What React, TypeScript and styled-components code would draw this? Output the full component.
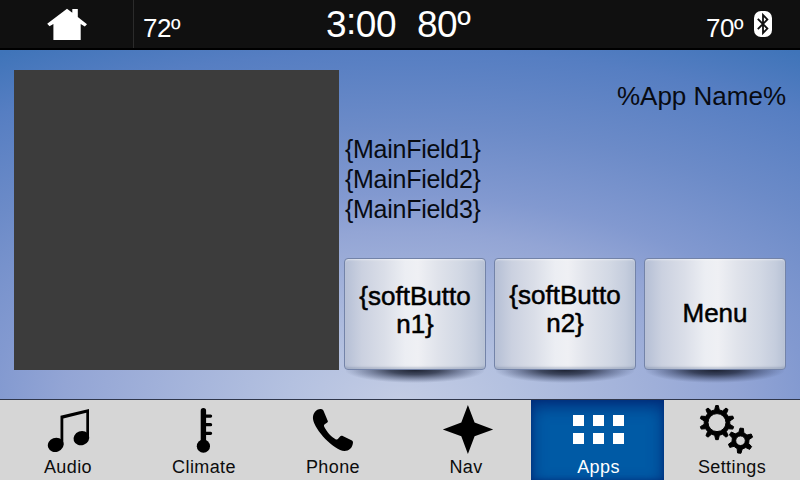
import React from "react";
import styled, { createGlobalStyle, css } from "styled-components";

const GlobalStyle = createGlobalStyle`
  * { box-sizing: border-box; }
  body {
    margin: 0;
    overflow: hidden;
    font-family: "Liberation Sans", Arial, sans-serif;
  }
`;

const Screen = styled.div`
  width: 800px;
  height: 480px;
  display: flex;
  flex-direction: column;
`;

const StatusBar = styled.header`
  height: 50px;
  flex: none;
  display: grid;
  grid-template-columns: 134px 166px 400px 100px;
  background: #101010;
  border-bottom: 2px solid #000;
  color: #fff;
`;

const HomeSlot = styled.div`
  display: flex;
  border-right: 1px solid #2b2b2b;
  padding: 8px 0 0 46px;
`;

const Temperature = styled.span<{ $pad: number }>`
  padding-left: ${(p) => p.$pad}px;
  font-size: 26px;
  line-height: 30px;
  letter-spacing: -0.4px;
  padding-top: 13px;
  white-space: nowrap;
`;

const CenterInfo = styled.div`
  display: flex;
  padding: 4px 0 0 26px;
  gap: 21px;
  font-size: 37px;
  line-height: 42px;
  letter-spacing: -0.5px;
`;

const ClockColon = styled.span`
  position: relative;
  top: -3px;
`;

const Passenger = styled.div`
  display: flex;
  margin-left: 6px;
`;

const BluetoothSlot = styled.div`
  padding: 11px 0 0 11px;
`;

const Main = styled.main`
  height: 349px;
  flex: none;
  display: flex;
  gap: 5px;
  padding: 20px 14px 0;
  background: radial-gradient(
    ellipse 800px 400px at 50% 100%,
    #c3cce4 0%,
    #b4c1e0 14%,
    #93a5d5 42%,
    #8299d0 51%,
    #6c8bc8 68%,
    #567ec2 87%,
    #3f74b9 100%
  );
`;

const Artwork = styled.div`
  width: 325px;
  height: 300px;
  flex: none;
  background: #3c3c3c;
`;

const Content = styled.section`
  flex: 1;
  display: flex;
  flex-direction: column;
  color: #080b12;
`;

const AppName = styled.div`
  height: 64px;
  padding-top: 11px;
  text-align: right;
  font-size: 26px;
  line-height: 30px;
  letter-spacing: 0;
`;

const Fields = styled.div`
  height: 124px;
  padding-left: 1px;
  font-size: 25px;
  line-height: 30px;
  letter-spacing: -0.28px;
`;

const SoftButtons = styled.div`
  display: flex;
  gap: 8px;
`;

const SoftButton = styled.button<{ $drop: number }>`
  position: relative;
  width: 142px;
  height: 112px;
  padding: ${(p) => p.$drop}px 12px 0;
  display: flex;
  align-items: flex-start;
  justify-content: center;
  border: 1px solid #7383a8;
  border-radius: 4px;
  background: linear-gradient(
    90deg,
    #b5bfd5 0%,
    #cbd1e0 12%,
    #dadee8 28%,
    #eceef3 43%,
    #eff0f4 52%,
    #e0e3eb 66%,
    #d2d8e4 82%,
    #c5cddd 93%,
    #b7c2d5 100%
  );
  box-shadow: inset 0 1px 2px rgba(255, 255, 255, 0.5), inset 0 -2px 2px rgba(110, 125, 155, 0.35);
  color: #000;
  font: 26px/28px "Liberation Sans", Arial, sans-serif;
  letter-spacing: 0;
  word-break: break-all;
  -webkit-text-stroke: 0.5px #000;

  &::after {
    content: "";
    position: absolute;
    left: 1px;
    right: 1px;
    top: 111px;
    height: 13px;
    background: radial-gradient(
      ellipse 51% 100% at 50% 0,
      rgba(22, 27, 42, 0.95) 0%,
      rgba(25, 32, 52, 0.76) 35%,
      rgba(35, 45, 75, 0.42) 65%,
      rgba(50, 62, 95, 0.15) 88%,
      transparent 100%
    );
  }
`;

const TabBar = styled.nav`
  height: 81px;
  flex: none;
  display: grid;
  grid-template-columns: 136px 136px 122px 137px 133px 136px;
  border-top: 1px solid #30374b;
  background: #d6d6d6;
`;

const Tab = styled.a<{ $active?: boolean; $shift?: number }>`
  display: flex;
  flex-direction: column;
  align-items: center;
  padding-left: ${(p) => p.$shift ?? 0}px;
  color: #0c0c0c;
  ${(p) =>
    p.$active &&
    css`
      color: #fff;
      background: #005aa5;
      box-shadow: inset 0 6px 16px #002b78, inset 0 0 4px #00367f;
    `}
`;

const IconBox = styled.div`
  height: 57px;
  padding-top: 2px;
`;

const TabLabel = styled.span`
  font-size: 18px;
  line-height: 20px;
  letter-spacing: 0.4px;
`;

const AppGrid = styled.div`
  display: grid;
  grid-template-columns: repeat(3, 11px);
  grid-auto-rows: 11px;
  gap: 7px 9px;
  padding-top: 13px;
  & > i {
    background: #fff;
  }
`;

/* Closed outline of a cog with evenly spaced, slightly tapered teeth. */
function gear(cx: number, cy: number, outer: number, body: number, hole: number, teeth: number, turn: number, base: number, tip: number) {
  const at = (r: number, a: number) =>
    `${(cx + r * Math.sin(a)).toFixed(2)} ${(cy - r * Math.cos(a)).toFixed(2)}`;
  const step = (Math.PI * 2) / teeth;
  const points: string[] = [];
  for (let i = 0; i < teeth; i++) {
    const a = turn + i * step;
    points.push(at(body, a - step * base), at(outer, a - step * tip), at(outer, a + step * tip), at(body, a + step * base));
  }
  return `M${points.join("L")}ZM${cx - hole} ${cy}a${hole} ${hole} 0 1 0 ${hole * 2} 0a${hole} ${hole} 0 1 0 ${-hole * 2} 0Z`;
}

const HomeIcon = () => (
  <svg width="42" height="33" viewBox="46 8 42 33" fill="#fff">
    <path d="M67 8.8 72.3 12.8V9H77.8V17L87 24.2 84.8 26.4 80.7 24V40H53.4V24L49.5 26.2 47.2 23.8Z" />
  </svg>
);

const BluetoothIcon = () => (
  <svg width="19" height="27" viewBox="0 0 19 27">
    <rect x="0" y="0" width="18" height="26" rx="7" fill="#fff" />
    <path d="M3.8 7.8 13.4 17.6 9 22V4L13.4 8.4 3.8 18.2" fill="none" stroke="#101010" strokeWidth="1.8" />
  </svg>
);

const AudioIcon = () => (
  <svg width="60" height="52" viewBox="38 402 60 52">
    <ellipse cx="55.7" cy="444.8" rx="8" ry="7" transform="rotate(-20 55.7 444.8)" />
    <ellipse cx="81.4" cy="438.2" rx="8" ry="7" transform="rotate(-20 81.4 438.2)" />
    <path d="M60.5 415.8 89 408.9V438.5H86.3V412.7L63.3 418.4V445H60.5Z" />
  </svg>
);

const ClimateIcon = () => (
  <svg width="60" height="52" viewBox="174 402 60 52">
    <circle cx="203.4" cy="446.2" r="6.6" />
    <path d="M203.4 410.7V445" stroke="#000" strokeWidth="5.4" strokeLinecap="round" />
    <path d="M204 416.1H210.6M204 424.7H210.6M204 433.3H210.6" stroke="#000" strokeWidth="3.2" strokeLinecap="round" />
  </svg>
);

const PhoneIcon = () => (
  <svg width="60" height="52" viewBox="303 402 60 52">
    <path d="M313 419C312.5 413.5 316 409 320.5 409Q322.7 408.7 323.4 410.5L327.9 421.2Q328 422 327 422.8L324.7 424.2Q323.4 425 324.2 426.8C327 432.5 332 437.5 335.5 439.2Q337.2 440 338.3 438.6L340.3 436.2Q341 435.4 342.2 435.8L352 440.5Q353.2 441.2 353 442.8C352.4 448 349 451 344.5 451C334 450.500 314.500 430 313 419Z" />
  </svg>
);

const NavIcon = () => (
  <svg width="60" height="52" viewBox="436 402 60 52">
    <path d="M467.9 404.9 474.6 422.4 493.2 429.4 474.6 436.2 467.9 453.9 461.3 436.2 442.8 429.4 461.3 422.4Z" />
  </svg>
);

const SettingsIcon = () => (
  <svg width="60" height="54" viewBox="702 402 60 54" overflow="visible" fillRule="evenodd" stroke="#000" strokeWidth="1" strokeLinejoin="round">
    <path d={gear(717, 422.6, 17.1, 12.9, 9, 10, 0, 0.29, 0.12)} />
    <path d={gear(740.5, 440.7, 12.6, 8.6, 4.8, 6, 0.1, 0.28, 0.13)} />
  </svg>
);

const AppsIcon = () => (
  <AppGrid>
    {Array.from({ length: 6 }, (_, i) => (
      <i key={i} />
    ))}
  </AppGrid>
);

const tabs = [
  { label: "Audio", Icon: AudioIcon },
  { label: "Climate", Icon: ClimateIcon },
  { label: "Phone", Icon: PhoneIcon },
  { label: "Nav", Icon: NavIcon, shift: 7 },
  { label: "Apps", Icon: AppsIcon, shift: 2, active: true },
  { label: "Settings", Icon: SettingsIcon },
];

const softButtons = [
  { label: "{softButton1}", drop: 23 },
  { label: "{softButton2}", drop: 22 },
  { label: "Menu", drop: 40 },
];

export default function App() {
  return (
    <Screen>
      <GlobalStyle />
      <StatusBar>
        <HomeSlot>
          <HomeIcon />
        </HomeSlot>
        <Temperature $pad={9}>72º</Temperature>
        <CenterInfo>
          <span>
            3<ClockColon>:</ClockColon>00
          </span>
          <span>80º</span>
        </CenterInfo>
        <Passenger>
          <Temperature $pad={0}>70º</Temperature>
          <BluetoothSlot>
            <BluetoothIcon />
          </BluetoothSlot>
        </Passenger>
      </StatusBar>
      <Main>
        <Artwork />
        <Content>
          <AppName>%App Name%</AppName>
          <Fields>
            <div>{"{MainField1}"}</div>
            <div>{"{MainField2}"}</div>
            <div>{"{MainField3}"}</div>
          </Fields>
          <SoftButtons>
            {softButtons.map((b) => (
              <SoftButton key={b.label} $drop={b.drop}>
                {b.label}
              </SoftButton>
            ))}
          </SoftButtons>
        </Content>
      </Main>
      <TabBar>
        {tabs.map(({ label, Icon, shift, active }) => (
          <Tab key={label} $active={active} $shift={shift}>
            <IconBox>
              <Icon />
            </IconBox>
            <TabLabel>{label}</TabLabel>
          </Tab>
        ))}
      </TabBar>
    </Screen>
  );
}
